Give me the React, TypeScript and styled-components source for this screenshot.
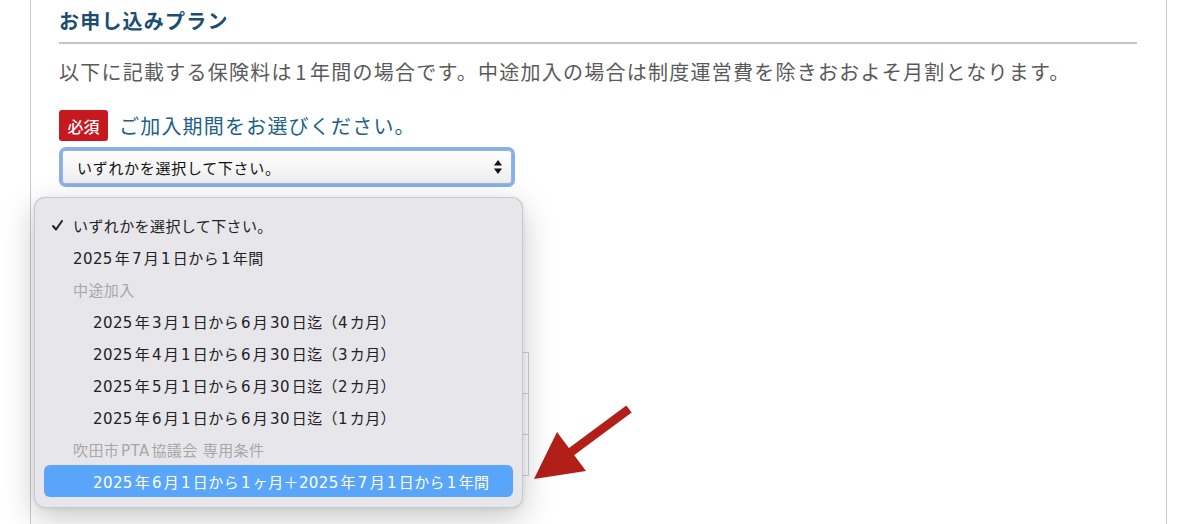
import React from 'react'
import styled, { createGlobalStyle } from 'styled-components'

const GlobalStyle = createGlobalStyle`
  html, body {
    margin: 0;
    padding: 0;
    background: #fff;
    font-family: "Noto Sans CJK JP", "Noto Sans", sans-serif;
    text-autospace: normal;
  }
`

const Page = styled.div`
  position: relative;
  width: 1200px;
  height: 524px;
  overflow: hidden;
`

const Panel = styled.section`
  box-sizing: border-box;
  margin-left: 30px;
  width: 1137px;
  height: 524px;
  border-left: 1px solid #c9c9c9;
  border-right: 1px solid #c9c9c9;
  padding: 0 29px 0 28px;
`

const Heading = styled.h2`
  margin: 0;
  padding: 6px 0 6px;
  font-size: 20px;
  line-height: 30px;
  font-weight: 700;
  letter-spacing: 1.2px;
  color: #1c4e72;
  border-bottom: 2px solid #c4c4c4;
`

const Lead = styled.p`
  margin: 13px 0 0;
  font-size: 20px;
  line-height: 30px;
  letter-spacing: 1.25px;
  color: #5a5a5a;
`

const FieldLabel = styled.div`
  display: flex;
  align-items: center;
  gap: 11px;
  margin-top: 23px;
`

const Required = styled.span`
  display: inline-flex;
  align-items: center;
  justify-content: center;
  width: 49px;
  height: 31px;
  border-radius: 3px;
  background: #c5181f;
  color: #fff;
  font-size: 16px;
  font-weight: 500;
`

const LabelText = styled.span`
  font-size: 20px;
  line-height: 30px;
  letter-spacing: 1.2px;
  color: #215f88;
`

const SelectWrap = styled.div`
  position: relative;
  margin-top: 6px;
  width: 456px;
`

const SelectBox = styled.div`
  box-sizing: border-box;
  height: 40px;
  border: 3px solid #86b0ee;
  border-radius: 7px;
  padding: 0 10px 0 15px;
  display: flex;
  align-items: center;
  justify-content: space-between;
  background: linear-gradient(#ffffff, #ededed);
  box-shadow: inset 0 0 0 1px #9fb4d4;
  font-size: 15px;
  letter-spacing: 0.7px;
  color: #111;
`

const Popup = styled.div`
  position: absolute;
  left: -25px;
  top: 50px;
  z-index: 5;
  box-sizing: border-box;
  width: 489px;
  padding: 11px 9px 10px;
  background: #e7e6eb;
  border: 1px solid rgba(0, 0, 0, 0.13);
  border-radius: 11px;
  box-shadow: 0 10px 32px rgba(0, 0, 0, 0.22), 0 1px 4px rgba(0, 0, 0, 0.08);
`

const Option = styled.div<{ $indent?: boolean; $group?: boolean; $active?: boolean }>`
  position: relative;
  height: 32px;
  display: flex;
  align-items: center;
  padding-left: ${(p) => (p.$indent ? 49 : 29)}px;
  border-radius: 6px;
  font-family: "DejaVu Sans", "Noto Sans CJK JP", sans-serif;
  font-size: 15px;
  letter-spacing: 0.4px;
  color: ${(p) => (p.$active ? '#fff' : p.$group ? '#a7a7a9' : '#222')};
  background: ${(p) => (p.$active ? '#58a5f9' : 'transparent')};
`

const Check = styled.svg`
  position: absolute;
  left: 8px;
  top: 11px;
`

const Table = styled.div`
  margin-top: 165px;
  width: 468px;
  border: 1px solid #cfcfcf;
`

const TableRow = styled.div`
  height: 40px;
  border-top: 1px solid #cfcfcf;

  &:first-child {
    border-top: none;
  }
`

const Arrow = styled.svg`
  position: absolute;
  left: 525px;
  top: 400px;
`

const options = [
  { label: 'いずれかを選択して下さい。', checked: true },
  { label: '2025年7月1日から1年間' },
  { label: '中途加入', group: true },
  { label: '2025年3月1日から6月30日迄（4カ月）', indent: true },
  { label: '2025年4月1日から6月30日迄（3カ月）', indent: true },
  { label: '2025年5月1日から6月30日迄（2カ月）', indent: true },
  { label: '2025年6月1日から6月30日迄（1カ月）', indent: true },
  { label: '吹田市PTA協議会 専用条件', group: true },
  { label: '2025年6月1日から1ヶ月＋2025年7月1日から1年間', indent: true, active: true },
]

export default function App() {
  return (
    <Page>
      <GlobalStyle />
      <Panel>
        <Heading>お申し込みプラン</Heading>
        <Lead>
          以下に記載する保険料は1年間の場合です。中途加入の場合は制度運営費を除きおおよそ月割となります。
        </Lead>
        <FieldLabel>
          <Required>必須</Required>
          <LabelText>ご加入期間をお選びください。</LabelText>
        </FieldLabel>
        <SelectWrap>
          <SelectBox>
            <span>いずれかを選択して下さい。</span>
            <svg width="8" height="14" viewBox="0 0 8 14">
              <path d="M4 0 L8 5.5 L0 5.5 Z" fill="#111" />
              <path d="M4 14 L8 8.5 L0 8.5 Z" fill="#111" />
            </svg>
          </SelectBox>
          <Popup>
            {options.map((o) => (
              <Option key={o.label} $indent={o.indent} $group={o.group} $active={o.active}>
                {o.checked && (
                  <Check width="11" height="11" viewBox="0 0 11 11">
                    <path
                      d="M1 6 L4 9.5 L10 1"
                      fill="none"
                      stroke="#222"
                      strokeWidth="2"
                      strokeLinecap="round"
                      strokeLinejoin="round"
                    />
                  </Check>
                )}
                {o.label}
              </Option>
            ))}
          </Popup>
        </SelectWrap>
        <Table>
          <TableRow />
          <TableRow />
          <TableRow />
        </Table>
      </Panel>
      <Arrow width="110" height="85" viewBox="0 0 110 85">
        <line x1="104" y1="9" x2="46" y2="52" stroke="#b11f18" strokeWidth="9" />
        <path d="M9 79 L32 32 L61 71 Z" fill="#b11f18" />
      </Arrow>
    </Page>
  )
}
